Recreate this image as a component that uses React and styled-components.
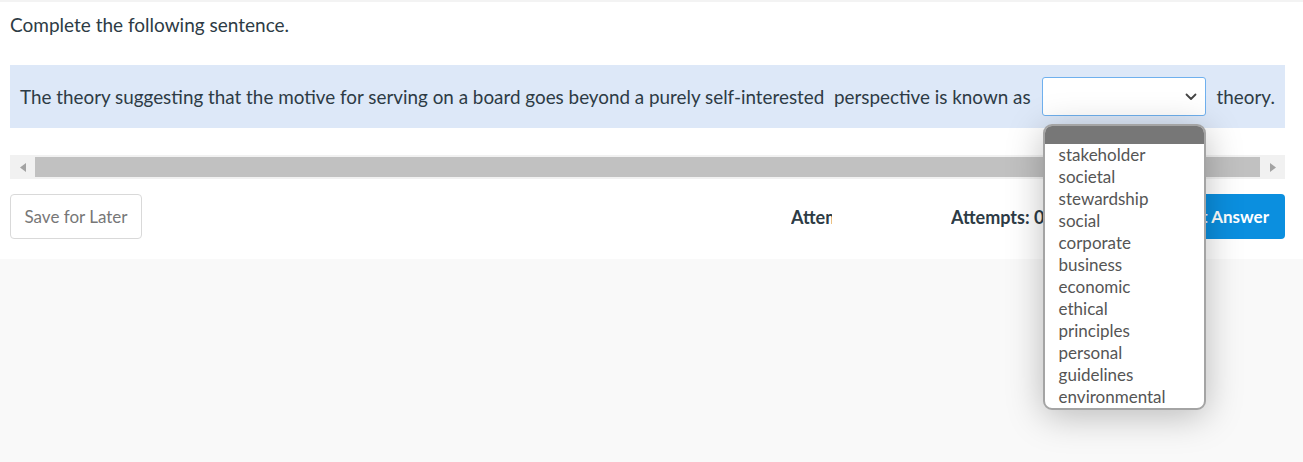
import React from "react";
import styled, { createGlobalStyle } from "styled-components";

const Global = createGlobalStyle`
  html, body { margin: 0; padding: 0; background: #f9f9f9; }
  body { font-family: Lato, "Noto Sans", sans-serif; color: #333; }
  * { box-sizing: border-box; }
`;

const Page = styled.div`
  min-height: 462px;
  background: #f9f9f9;
`;

const Card = styled.div`
  background: #fff;
  border-top: 2px solid #f3f3f3;
  padding: 12px 18px 20px 10px;
`;

const Heading = styled.div`
  font-size: 19px;
  line-height: 22px;
  color: #2d3b45;
  margin-bottom: 29px;
`;

const Band = styled.div`
  background: #dde8f8;
  display: flex;
  align-items: center;
  height: 63px;
  padding: 0 10px;
  font-size: 18.85px;
  color: #2d3b45;
  white-space: nowrap;
`;

const SelectWrap = styled.div`
  position: relative;
  margin: 0 11px 0 11px;
`;

const SelectBox = styled.div`
  width: 164px;
  height: 39px;
  background: #fff;
  border: 1px solid #6fb0ee;
  border-radius: 3px;
  display: flex;
  align-items: center;
  justify-content: flex-end;
  padding-right: 8px;
`;

const List = styled.div`
  position: absolute;
  top: 47px;
  left: 1px;
  width: 163px;
  border: 2px solid #a4a4a4;
  border-radius: 9px;
  background: #fff;
  overflow: hidden;
  box-shadow: 0 6px 36px rgba(0, 0, 0, 0.26);
  z-index: 10;
`;

const ListHead = styled.div`
  height: 18px;
  background: #777;
`;

const Item = styled.div`
  font-size: 17px;
  line-height: 22px;
  color: #555;
  padding-left: 14px;
`;

const Scroller = styled.div`
  margin-top: 27px;
  height: 24px;
  background: #f1f1f1;
  display: flex;
  align-items: center;
`;

const Arrow = styled.div`
  width: 25px;
  height: 100%;
  display: flex;
  align-items: center;
  justify-content: center;
`;

const Thumb = styled.div`
  flex: 1;
  height: 20px;
  background: #c1c1c1;
`;

const Footer = styled.div`
  margin-top: 15px;
  display: flex;
  align-items: center;
  height: 45px;
`;

const GhostButton = styled.div`
  height: 45px;
  width: 132px;
  border: 1px solid #d9d9d9;
  border-radius: 4px;
  display: flex;
  align-items: center;
  justify-content: center;
  font-size: 17px;
  color: #777;
`;

const Attempts = styled.div`
  width: ${(p) => p.$w}px;
  margin-left: ${(p) => p.$ml}px;
  overflow: hidden;
  white-space: nowrap;
  font-size: 18px;
  font-weight: 700;
  color: #2d3b45;
`;

const PrimaryButton = styled.div`
  margin-left: auto;
  height: 45px;
  padding: 0 16px;
  background: #0b8fdf;
  border-radius: 4px;
  display: flex;
  align-items: center;
  font-size: 17px;
  font-weight: 700;
  color: #fff;
  white-space: nowrap;
`;

const options = [
  "stakeholder",
  "societal",
  "stewardship",
  "social",
  "corporate",
  "business",
  "economic",
  "ethical",
  "principles",
  "personal",
  "guidelines",
  "environmental",
];

export default function App() {
  return (
    <Page>
      <Global />
      <Card>
        <Heading>Complete the following sentence.</Heading>
        <Band>
          The theory suggesting that the motive for serving on a board goes beyond a purely self-interested&nbsp; perspective is known as
          <SelectWrap>
            <SelectBox>
              <svg width="12" height="8" viewBox="0 0 12 8">
                <path d="M1.5 1.5 L6 6 L10.5 1.5" fill="none" stroke="#444" strokeWidth="1.8" strokeLinecap="round" strokeLinejoin="round" />
              </svg>
            </SelectBox>
            <List>
              <ListHead />
              {options.map((o) => (
                <Item key={o}>{o}</Item>
              ))}
            </List>
          </SelectWrap>
          theory.
        </Band>
        <Scroller>
          <Arrow>
            <svg width="6" height="9" viewBox="0 0 6 9">
              <path d="M6 0 L0 4.5 L6 9 Z" fill="#a3a3a3" />
            </svg>
          </Arrow>
          <Thumb />
          <Arrow>
            <svg width="6" height="9" viewBox="0 0 6 9">
              <path d="M0 0 L6 4.5 L0 9 Z" fill="#a3a3a3" />
            </svg>
          </Arrow>
        </Scroller>
        <Footer>
          <GhostButton>Save for Later</GhostButton>
          <Attempts $w={41} $ml={649}>Attempts: 0 of 3 used</Attempts>
          <Attempts $w={180} $ml={119}>Attempts: 0 of 3 used</Attempts>
          <PrimaryButton>Submit Answer</PrimaryButton>
        </Footer>
      </Card>
    </Page>
  );
}
